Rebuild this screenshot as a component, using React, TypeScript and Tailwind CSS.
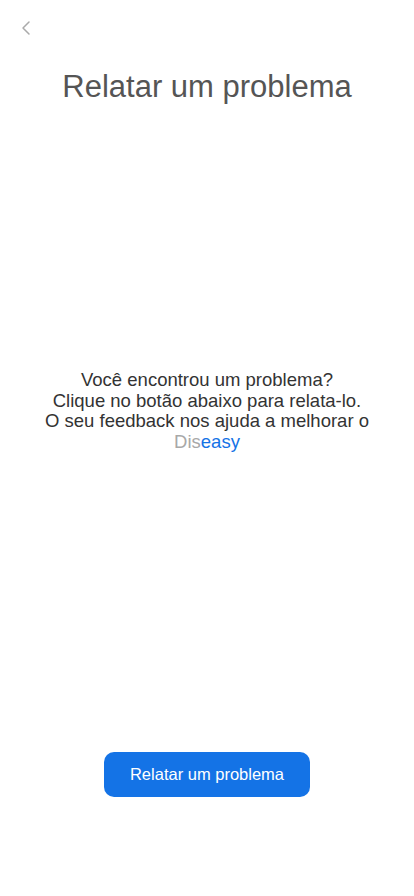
import { ChevronLeft } from "lucide-react"

export default function App() {
  return (
    <div
      className="flex h-[896px] w-full flex-col bg-white"
      style={{ fontFamily: '"Liberation Sans", Arial, sans-serif' }}
    >
      <div className="flex h-[56px] items-center pl-[14px]">
        <ChevronLeft className="h-[24px] w-[24px] text-[#aaaaaa]" strokeWidth={1.5} />
      </div>
      <h1 className="mt-[13px] text-center text-[31px] leading-[36px] text-[#555555]">
        Relatar um problema
      </h1>
      <div className="mt-[265px] text-center text-[18.5px] leading-[20.7px] text-[#333333]">
        <p>Você encontrou um problema?</p>
        <p>Clique no botão abaixo para relata-lo.</p>
        <p>O seu feedback nos ajuda a melhorar o</p>
        <p>
          <span className="text-[#a8a8a8]">Dis</span>
          <span className="text-[#1473e6]">easy</span>
        </p>
      </div>
      <div className="mt-auto mb-[99px] flex justify-center">
        <button className="h-[45px] w-[206px] rounded-[10px] bg-[#1473e6] text-[16.5px] text-white">
          Relatar um problema
        </button>
      </div>
    </div>
  )
}
